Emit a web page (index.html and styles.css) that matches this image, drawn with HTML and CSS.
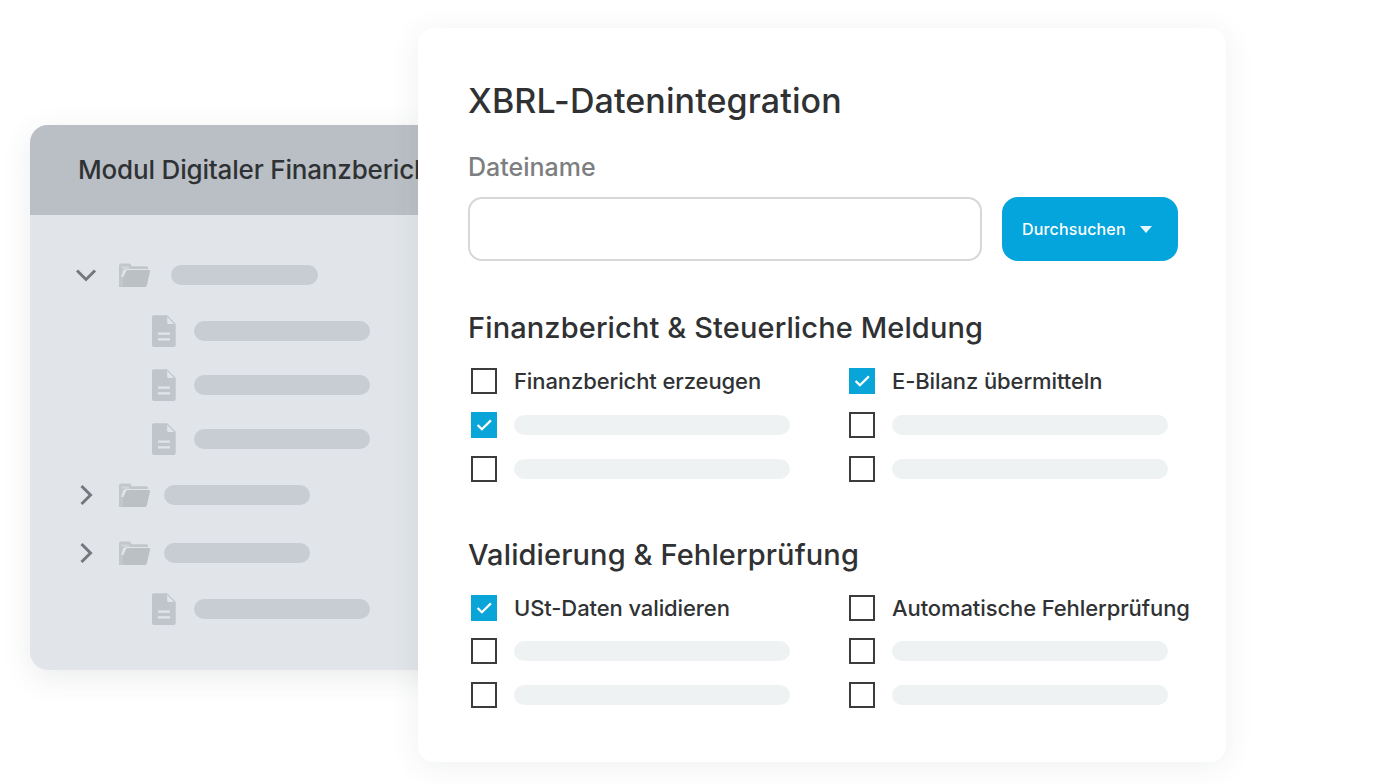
FILE: index.html
```html
<!DOCTYPE html>
<html lang="de">
<head>
<meta charset="utf-8">
<title>XBRL-Datenintegration</title>
<link rel="stylesheet" href="styles.css">
</head>
<body>
<svg class="defs" width="0" height="0" aria-hidden="true">
  <defs>
    <symbol id="folder" viewBox="0 0 32 24">
      <path fill="#c2c7cc" d="M1 3.200C1 1.600 1.800 .6 3.200 .6h7.600c1 0 1.600.5 2.200 1.400l.8 1.300h14.400c1.200 0 1.900.7 1.900 1.900v.8H8.400c-2 0-3.200 1-3.700 2.800L2.600 16.400 2.500 22H1z"/>
      <path fill="#e0e4e8" d="M2.600 3.400h8l1.300 2.300H4.600z" opacity=".55"/>
      <path fill="#bbc0c5" d="M7.900 8.600c.3-1 1-1.500 2-1.500H31c.7 0 1.100.5 1 1.300l-3.200 14c-.2.9-.9 1.500-1.800 1.500H1.400c-.4 0-.6-.3-.5-.7z"/>
      <path fill="#c2c7cc" d="M1 14h4v9.900H1z"/>
    </symbol>
    <symbol id="file" viewBox="0 0 24 32">
      <path fill="#bfc5ca" d="M2 .2h12.600c.5 0 .9.2 1.200.5l7.300 7.600c.4.4.6.8.6 1.300V30c0 1.200-.8 2-2 2H2c-1.200 0-2-.8-2-2V2C0 .9.800.2 2 .2z"/>
      <path fill="#e1e5e9" d="M15.200 1.800l6.800 7.100h-5.300c-.9 0-1.500-.6-1.500-1.500z"/>
      <path fill="#e1e5e9" d="M6 17.500h12v2.300H6zM6 23.200h12v2.300H6z"/>
    </symbol>
    <symbol id="tick" viewBox="0 0 26 26">
      <path fill="none" stroke="#fff" stroke-width="2.300" d="M6.600 13l4.300 4.200 9-8.800"/>
    </symbol>
  </defs>
</svg>

<main class="stage">
  <section class="tree-panel">
    <header class="tree-head">Modul Digitaler Finanzbericht</header>
    <div class="tree-body">
      <div class="tree-row row-first">
        <svg class="chev" viewBox="0 0 24 24"><path d="M3 7.500l9 9 9-9"/></svg>
        <svg class="folder"><use href="#folder"/></svg>
        <span class="bar bar-root"></span>
      </div>
      <div class="tree-row row-file row-a">
        <svg class="file"><use href="#file"/></svg>
        <span class="bar bar-file"></span>
      </div>
      <div class="tree-row row-file">
        <svg class="file"><use href="#file"/></svg>
        <span class="bar bar-file"></span>
      </div>
      <div class="tree-row row-file">
        <svg class="file"><use href="#file"/></svg>
        <span class="bar bar-file"></span>
      </div>
      <div class="tree-row row-b">
        <svg class="chev" viewBox="0 0 24 24"><path d="M7.500 3l9 9-9 9"/></svg>
        <svg class="folder"><use href="#folder"/></svg>
        <span class="bar bar-folder"></span>
      </div>
      <div class="tree-row row-c">
        <svg class="chev" viewBox="0 0 24 24"><path d="M7.500 3l9 9-9 9"/></svg>
        <svg class="folder"><use href="#folder"/></svg>
        <span class="bar bar-folder"></span>
      </div>
      <div class="tree-row row-file row-b">
        <svg class="file"><use href="#file"/></svg>
        <span class="bar bar-file"></span>
      </div>
    </div>
  </section>

  <section class="card">
    <h1 class="title">XBRL-Datenintegration</h1>
    <label class="field-label" for="datei">Dateiname</label>
    <div class="file-line">
      <input class="file-input" id="datei" type="text">
      <button class="browse" type="button">Durchsuchen<span class="caret"></span></button>
    </div>

    <h2 class="section-title">Finanzbericht &amp; Steuerliche Meldung</h2>
    <div class="checks">
      <div class="check"><span class="box"></span><span class="check-text">Finanzbericht erzeugen</span></div>
      <div class="check"><span class="box on"><svg><use href="#tick"/></svg></span><span class="check-text">E-Bilanz übermitteln</span></div>
      <div class="check"><span class="box on"><svg><use href="#tick"/></svg></span><span class="line"></span></div>
      <div class="check"><span class="box"></span><span class="line"></span></div>
      <div class="check"><span class="box"></span><span class="line"></span></div>
      <div class="check"><span class="box"></span><span class="line"></span></div>
    </div>

    <h2 class="section-title second">Validierung &amp; Fehlerprüfung</h2>
    <div class="checks tight">
      <div class="check"><span class="box on"><svg><use href="#tick"/></svg></span><span class="check-text">USt-Daten validieren</span></div>
      <div class="check"><span class="box"></span><span class="check-text">Automatische Fehlerprüfung</span></div>
      <div class="check"><span class="box"></span><span class="line"></span></div>
      <div class="check"><span class="box"></span><span class="line"></span></div>
      <div class="check"><span class="box"></span><span class="line"></span></div>
      <div class="check"><span class="box"></span><span class="line"></span></div>
    </div>
  </section>
</main>
</body>
</html>
```
FILE: styles.css
```css
* { box-sizing: border-box; }

html, body {
  margin: 0;
  height: 100%;
  background: #fff;
  overflow: hidden;
}

body {
  font-family: Inter, "Liberation Sans", sans-serif;
  color: #2f3133;
}

.defs { position: absolute; }

.stage {
  position: relative;
  width: 1392px;
  height: 784px;
}

/* back window */
.tree-panel {
  position: absolute;
  left: 30px;
  top: 125px;
  width: 440px;
  height: 545px;
  border-radius: 18px;
  overflow: hidden;
  background: #e1e5e9;
  box-shadow: 0 8px 30px rgba(60, 70, 80, .10);
}

.tree-head {
  height: 90px;
  padding: 29px 0 0 48px;
  background: #babfc5;
  font-size: 26px;
  line-height: 32px;
  font-weight: 450;
  letter-spacing: -.18px;
  white-space: nowrap;
  color: #2f3234;
}

.tree-body {
  display: flex;
  flex-direction: column;
  padding-left: 44px;
}

.tree-row {
  display: flex;
  align-items: center;
  height: 32px;
  margin-top: 22px;
}

.row-first { margin-top: 44px; }
.row-a { margin-top: 24px; }
.row-b { margin-top: 24px; }
.row-c { margin-top: 26px; }

.row-file { padding-left: 78px; }

.chev {
  width: 24px;
  height: 24px;
  flex: none;
}

.chev path {
  fill: none;
  stroke: #75797e;
  stroke-width: 3;
}

.folder {
  width: 32px;
  height: 24px;
  flex: none;
  margin-left: 20px;
}

.file {
  width: 24px;
  height: 32px;
  flex: none;
}

.bar {
  display: block;
  height: 20px;
  border-radius: 10px;
  background: #c8cdd3;
}

.bar-root { width: 147px; margin-left: 21px; }
.bar-folder { width: 146px; margin-left: 14px; }
.bar-file { width: 176px; margin-left: 18px; }

/* front card */
.card {
  position: absolute;
  left: 418px;
  top: 28px;
  width: 808px;
  height: 734px;
  padding: 50px 48px 0 50px;
  border-radius: 16px;
  background: #fff;
  box-shadow: 0 4px 30px rgba(50, 60, 70, .08);
}

.title {
  margin: 0;
  font-size: 34px;
  line-height: 46px;
  font-weight: 500;
  letter-spacing: .1px;
  color: #2f3133;
}

.field-label {
  display: block;
  margin-top: 26px;
  font-size: 25px;
  line-height: 34px;
  font-weight: 500;
  color: #7c7e80;
}

.file-line {
  display: flex;
  gap: 20px;
  margin-top: 13px;
}

.file-input {
  width: 514px;
  height: 64px;
  border: 2px solid #d6d7d8;
  border-radius: 14px;
  background: #fff;
}

.browse {
  display: flex;
  align-items: center;
  width: 176px;
  height: 64px;
  padding: 0 0 0 20px;
  border: 0;
  border-radius: 16px;
  background: #03a5dc;
  color: #fff;
  font: 500 16px Inter, "Liberation Sans", sans-serif;
  letter-spacing: .15px;
}

.caret {
  width: 0;
  height: 0;
  margin-left: 14px;
  border-left: 6.5px solid transparent;
  border-right: 6.5px solid transparent;
  border-top: 7px solid #e6f6fc;
}

.section-title {
  margin: 48px 0 0;
  font-size: 29px;
  line-height: 38px;
  font-weight: 500;
  letter-spacing: .12px;
  color: #2f3133;
}

.section-title.second { margin-top: 45px; }

.checks {
  display: grid;
  grid-template-columns: 378px 1fr;
  grid-auto-rows: 44px;
  margin-top: 12px;
  padding-left: 3px;
}

.checks.tight { grid-template-rows: 43px 44px 44px; }

.check {
  display: flex;
  align-items: center;
  gap: 17px;
  height: 44px;
}

.box {
  flex: none;
  width: 26px;
  height: 26px;
  border: 2px solid #3a3c3e;
  background: #fff;
}

.box.on {
  border: 0;
  background: #09a5d9;
}

.box svg {
  display: block;
  width: 26px;
  height: 26px;
}

.check-text {
  font-size: 22px;
  font-weight: 450;
  letter-spacing: -.1px;
  white-space: nowrap;
  color: #303234;
}

.line {
  width: 276px;
  height: 20px;
  border-radius: 10px;
  background: #eff2f3;
}
```
